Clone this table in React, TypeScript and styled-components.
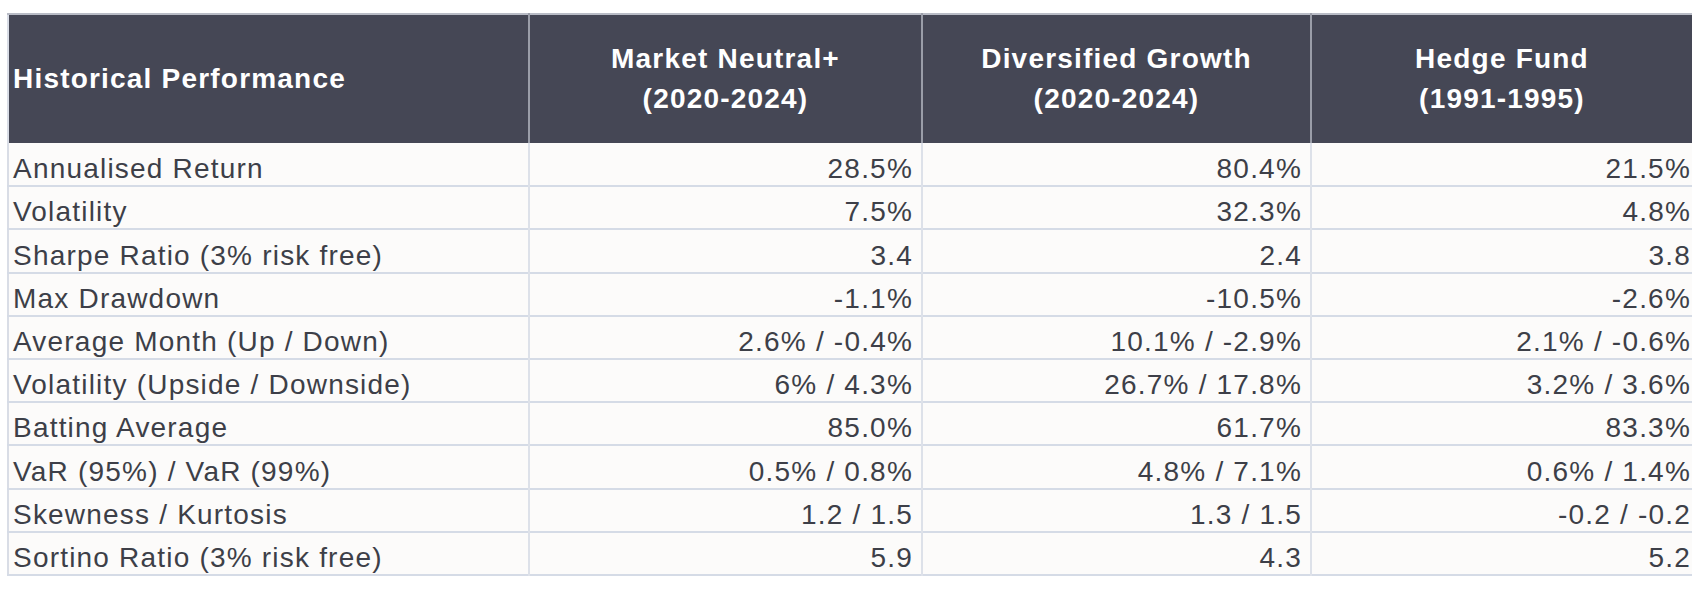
import styled, { createGlobalStyle } from 'styled-components'

const GlobalStyle = createGlobalStyle`
  html, body {
    margin: 0;
    padding: 0;
    background: #ffffff;
  }
  body {
    font-family: 'Liberation Sans', Arial, sans-serif;
  }
`

const Page = styled.div`
  padding: 13px 0 0 7px;
`

const Table = styled.table`
  width: 1684px;
  table-layout: fixed;
  border-collapse: collapse;
  border-left: 2px solid #d9dde6;
  font-family: 'Liberation Sans', Arial, sans-serif;
  letter-spacing: 1.2px;
`

const HeadRow = styled.tr`
  height: 129px;
  background: #454755;
  border-top: 2px solid #b9bcc6;
`

const HeadCell = styled.th<{ $align?: 'left' | 'center' }>`
  padding: 0 4px;
  color: #ffffff;
  font-size: 28px;
  font-weight: 700;
  line-height: 40px;
  text-align: ${(p) => p.$align ?? 'center'};
  vertical-align: middle;
  border-right: 2px solid #9a9da8;

  &:last-child {
    border-right: none;
  }
`

const BodyRow = styled.tr`
  height: 43.2px;
  background: #fcfbfa;
  border-bottom: 2px solid #d5dbe6;
`

const Cell = styled.td<{ $numeric?: boolean; $last?: boolean }>`
  padding: 0 ${(p) => (p.$last ? '1px' : '8px')} 0 ${(p) => (p.$numeric ? '0' : '4px')};
  color: #3d3f48;
  font-size: 28px;
  line-height: 33px;
  white-space: nowrap;
  overflow: hidden;
  text-align: ${(p) => (p.$numeric ? 'right' : 'left')};
  vertical-align: bottom;
  border-right: ${(p) => (p.$last ? 'none' : '2px solid #dde1e9')};
`

const columns = [
  { title: 'Historical Performance', width: 521 },
  { title: 'Market Neutral+', period: '(2020-2024)', width: 393 },
  { title: 'Diversified Growth', period: '(2020-2024)', width: 389 },
  { title: 'Hedge Fund', period: '(1991-1995)', width: 381 }
]

const rows: [string, string, string, string][] = [
  ['Annualised Return', '28.5%', '80.4%', '21.5%'],
  ['Volatility', '7.5%', '32.3%', '4.8%'],
  ['Sharpe Ratio (3% risk free)', '3.4', '2.4', '3.8'],
  ['Max Drawdown', '-1.1%', '-10.5%', '-2.6%'],
  ['Average Month (Up / Down)', '2.6% / -0.4%', '10.1% / -2.9%', '2.1% / -0.6%'],
  ['Volatility (Upside / Downside)', '6% / 4.3%', '26.7% / 17.8%', '3.2% / 3.6%'],
  ['Batting Average', '85.0%', '61.7%', '83.3%'],
  ['VaR (95%) / VaR (99%)', '0.5% / 0.8%', '4.8% / 7.1%', '0.6% / 1.4%'],
  ['Skewness / Kurtosis', '1.2 / 1.5', '1.3 / 1.5', '-0.2 / -0.2'],
  ['Sortino Ratio (3% risk free)', '5.9', '4.3', '5.2']
]

export default function App() {
  return (
    <Page>
      <GlobalStyle />
      <Table>
        <colgroup>
          {columns.map((col) => (
            <col key={col.title} style={{ width: col.width }} />
          ))}
        </colgroup>
        <thead>
          <HeadRow>
            {columns.map((col, index) => (
              <HeadCell key={col.title} $align={index === 0 ? 'left' : 'center'}>
                {col.title}
                {col.period && (
                  <>
                    <br />
                    {col.period}
                  </>
                )}
              </HeadCell>
            ))}
          </HeadRow>
        </thead>
        <tbody>
          {rows.map((row) => (
            <BodyRow key={row[0]}>
              {row.map((value, index) => (
                <Cell
                  key={index}
                  $numeric={index > 0}
                  $last={index === row.length - 1}
                >
                  {value}
                </Cell>
              ))}
            </BodyRow>
          ))}
        </tbody>
      </Table>
    </Page>
  )
}
